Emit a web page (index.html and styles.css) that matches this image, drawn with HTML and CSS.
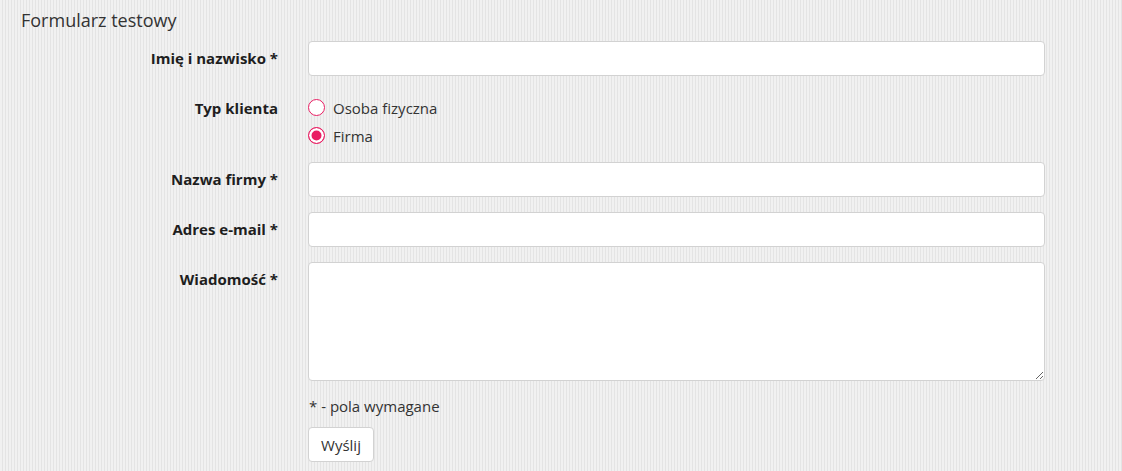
FILE: index.html
```html
<!DOCTYPE html>
<html lang="pl">
<head>
<meta charset="utf-8">
<title>Formularz testowy</title>
<link rel="stylesheet" href="styles.css">
</head>
<body>
<h1 class="title">Formularz testowy</h1>
<form class="form">
  <div class="row">
    <label class="lbl" for="name">Imię i nazwisko *</label>
    <input class="ctl" id="name" type="text">
  </div>
  <div class="row">
    <span class="lbl">Typ klienta</span>
    <div class="radios">
      <label class="radio"><input type="radio" name="typ"><span>Osoba fizyczna</span></label>
      <label class="radio"><input type="radio" name="typ" checked><span>Firma</span></label>
    </div>
  </div>
  <div class="row">
    <label class="lbl" for="firm">Nazwa firmy *</label>
    <input class="ctl" id="firm" type="text">
  </div>
  <div class="row">
    <label class="lbl" for="mail">Adres e-mail *</label>
    <input class="ctl" id="mail" type="email">
  </div>
  <div class="row">
    <label class="lbl" for="msg">Wiadomość *</label>
    <textarea class="ctl area" id="msg"></textarea>
  </div>
  <div class="row row-end">
    <div class="cell">
      <p class="note">* - pola wymagane</p>
      <button class="btn" type="button">Wyślij</button>
    </div>
  </div>
</form>
</body>
</html>
```

FILE: styles.css
```css
html, body {
  margin: 0;
  padding: 0;
}
body {
  font-family: "Open Sans", "Liberation Sans", sans-serif;
  font-size: 15px;
  line-height: 20px;
  color: #333;
  background: repeating-linear-gradient(90deg, #f1f1f1 0 2px, #e4e4e4 2px 3px);
  min-height: 471px;
}
.title {
  margin: 0;
  padding: 9px 21px 0;
  font-size: 18px;
  line-height: 22px;
  font-weight: 400;
  color: #333;
}
.form {
  margin-top: 10px;
}
.row {
  display: grid;
  grid-template-columns: 278px 737px;
  column-gap: 30px;
  margin-bottom: 15px;
}
.row-end {
  margin-bottom: 0;
}
.lbl {
  text-align: right;
  font-weight: 700;
  color: #1e1e1e;
  padding-top: 7px;
}
.ctl {
  box-sizing: border-box;
  height: 35px;
  margin: 0;
  border: 1px solid #d2d2d2;
  border-radius: 4px;
  background: #fff;
  font: inherit;
  padding: 6px 12px;
}
.area {
  height: 119px;
  resize: vertical;
}
.radios {
  padding-top: 7px;
  padding-bottom: 1px;
  display: flex;
  flex-direction: column;
  gap: 8px;
}
.radio {
  display: flex;
  align-items: center;
  gap: 8px;
  color: #333;
  height: 20px;
}
.radio input {
  appearance: none;
  -webkit-appearance: none;
  box-sizing: border-box;
  width: 17px;
  height: 17px;
  margin: -1px 0 0 0;
  border: 1.5px solid #e91e63;
  border-radius: 50%;
  background: #fff;
}
.radio input:checked {
  background: #e91e63;
  box-shadow: inset 0 0 0 2.5px #fff;
}
.cell {
  grid-column: 2;
}
.note {
  margin: 0 0 11px 1px;
  line-height: 20px;
}
.btn {
  box-sizing: border-box;
  height: 35px;
  width: 66px;
  padding: 0;
  border: 1px solid #d2d2d2;
  border-radius: 4px;
  background: #fff;
  font: inherit;
  color: #333;
}
```
